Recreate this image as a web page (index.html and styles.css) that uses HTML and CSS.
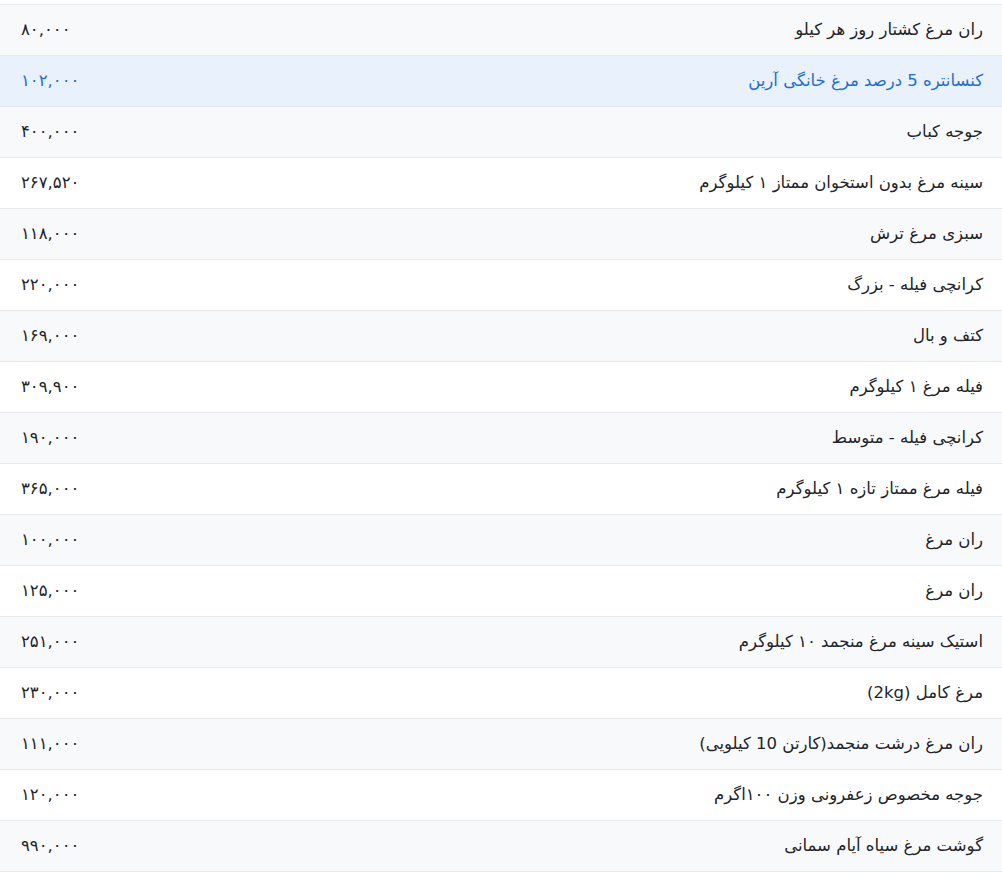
FILE: index.html
```html
<!DOCTYPE html>
<html lang="fa" dir="rtl">
<head>
<meta charset="utf-8">
<link rel="stylesheet" href="styles.css">
</head>
<body>
<div class="list">
  <div class="row striped"><span class="name">ران مرغ کشتار روز هر کیلو</span><span class="price">۸۰,۰۰۰</span></div>
  <div class="row active"><span class="name">کنسانتره 5 درصد مرغ خانگی آرین</span><span class="price">۱۰۲,۰۰۰</span></div>
  <div class="row striped"><span class="name">جوجه کباب</span><span class="price">۴۰۰,۰۰۰</span></div>
  <div class="row"><span class="name">سینه مرغ بدون استخوان ممتاز ۱ کیلوگرم</span><span class="price">۲۶۷,۵۲۰</span></div>
  <div class="row striped"><span class="name">سبزی مرغ ترش</span><span class="price">۱۱۸,۰۰۰</span></div>
  <div class="row"><span class="name">کرانچی فیله - بزرگ</span><span class="price">۲۲۰,۰۰۰</span></div>
  <div class="row striped"><span class="name">کتف و بال</span><span class="price">۱۶۹,۰۰۰</span></div>
  <div class="row"><span class="name">فیله مرغ ۱ کیلوگرم</span><span class="price">۳۰۹,۹۰۰</span></div>
  <div class="row striped"><span class="name">کرانچی فیله - متوسط</span><span class="price">۱۹۰,۰۰۰</span></div>
  <div class="row"><span class="name">فیله مرغ ممتاز تازه ۱ کیلوگرم</span><span class="price">۳۶۵,۰۰۰</span></div>
  <div class="row striped"><span class="name">ران مرغ</span><span class="price">۱۰۰,۰۰۰</span></div>
  <div class="row"><span class="name">ران مرغ</span><span class="price">۱۲۵,۰۰۰</span></div>
  <div class="row striped"><span class="name">استیک سینه مرغ منجمد ۱۰ کیلوگرم</span><span class="price">۲۵۱,۰۰۰</span></div>
  <div class="row"><span class="name">مرغ کامل (2kg)</span><span class="price">۲۳۰,۰۰۰</span></div>
  <div class="row striped"><span class="name">ران مرغ درشت منجمد(کارتن 10 کیلویی)</span><span class="price">۱۱۱,۰۰۰</span></div>
  <div class="row"><span class="name">جوجه مخصوص زعفرونی وزن ۱۰۰اگرم</span><span class="price">۱۲۰,۰۰۰</span></div>
  <div class="row striped"><span class="name">گوشت مرغ سیاه آیام سمانی</span><span class="price">۹۹۰,۰۰۰</span></div>
</div>
</body>
</html>
```
FILE: styles.css
```css
html, body {
  margin: 0;
  padding: 0;
  background: #ffffff;
}
body {
  font-family: "DejaVu Sans", "Noto Sans", sans-serif;
  font-size: 16.5px;
  color: #212529;
  padding-top: 4px;
}
.list {
  display: flex;
  flex-direction: column;
  border-bottom: 1px solid #e6e8eb;
}
.row {
  height: 50px;
  border-top: 1px solid #e6e8eb;
  display: flex;
  align-items: center;
  justify-content: space-between;
  padding: 0 19px 0 21px;
}
.row.striped {
  background: #f8f9fb;
}
.row.active {
  background: #e8f1fc;
  color: #1b6fd0;
}
.name {
  padding-bottom: 2px;
}
.price {
  direction: ltr;
  padding-bottom: 2px;
}
```
